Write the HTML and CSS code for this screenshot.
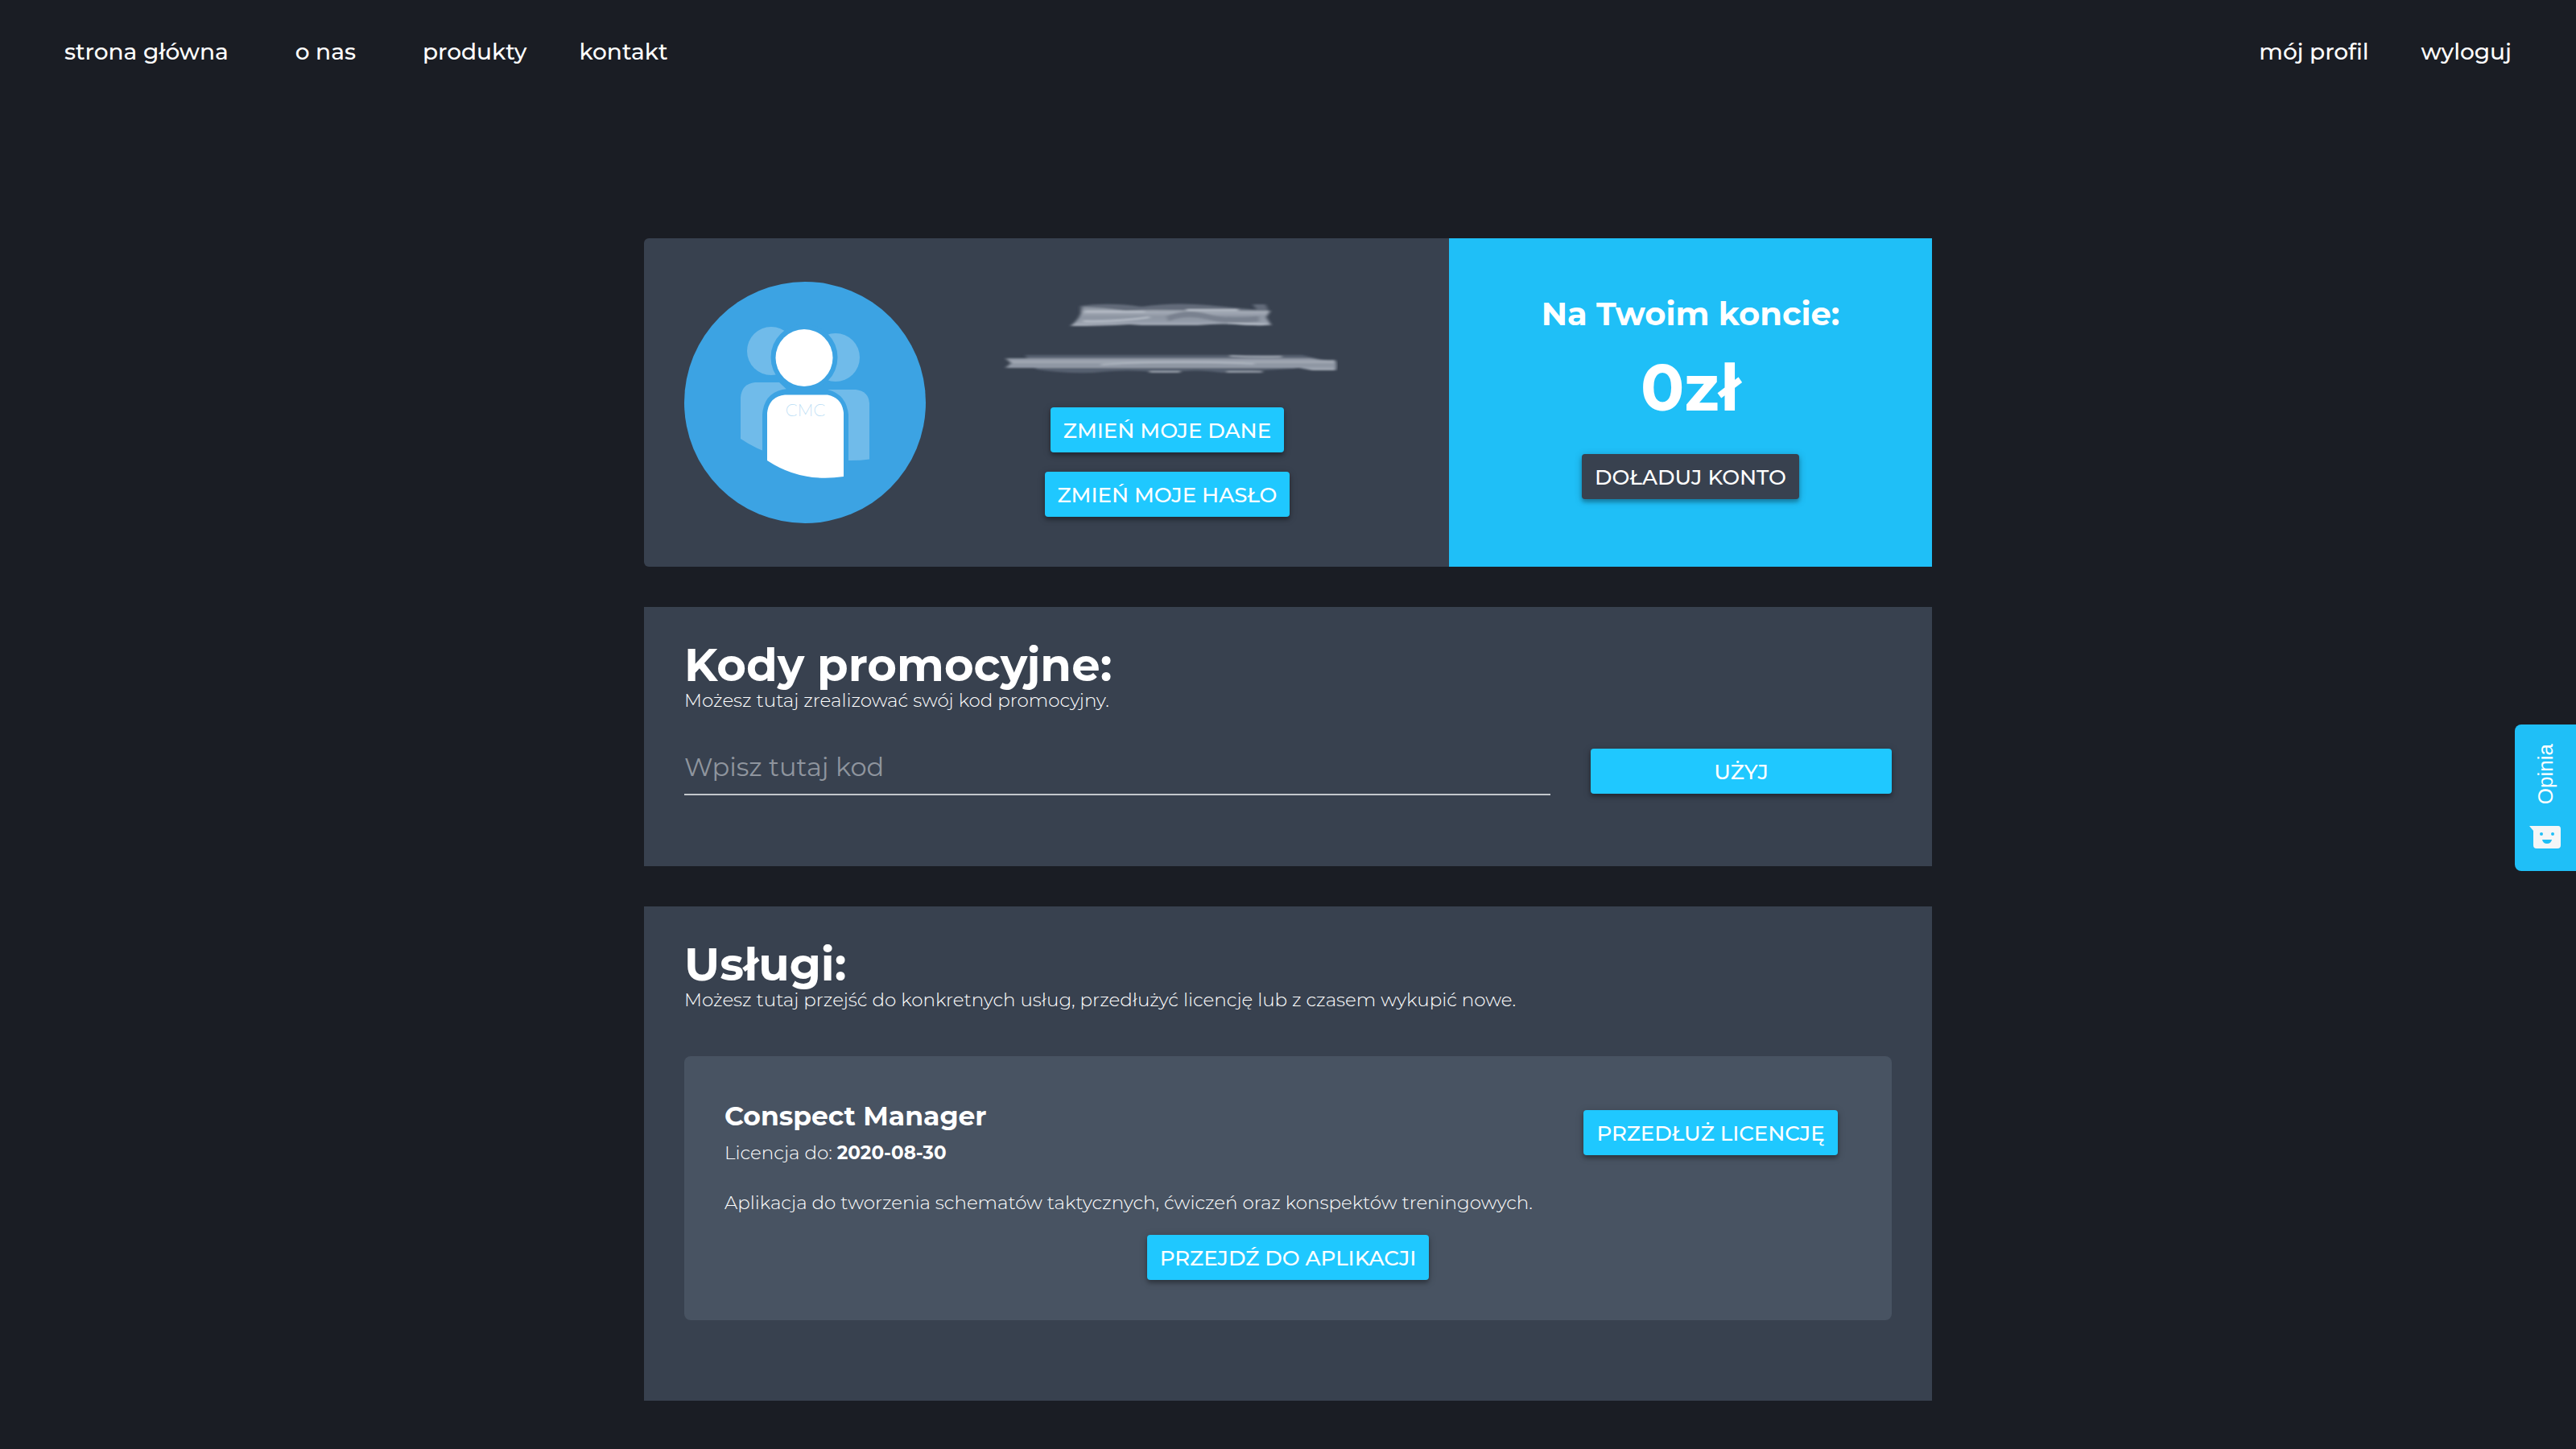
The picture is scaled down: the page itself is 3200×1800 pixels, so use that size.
FILE: index.html
```html
<!DOCTYPE html>
<html lang="pl">
<head>
<meta charset="utf-8">
<meta name="viewport" content="width=device-width, initial-scale=1">
<title>mój profil</title>
<link rel="stylesheet" href="styles.css">
</head>
<body>
<header class="topbar">
  <nav class="nav">
    <a class="nav-link nav-link-wide" href="#">strona główna</a>
    <a class="nav-link nav-link-wide" href="#">o nas</a>
    <a class="nav-link" href="#">produkty</a>
    <a class="nav-link" href="#">kontakt</a>
  </nav>
  <nav class="nav">
    <a class="nav-link" href="#">mój profil</a>
    <a class="nav-link" href="#">wyloguj</a>
  </nav>
</header>

<main class="content">
  <section class="profile">
    <div class="profile-user">
      <svg class="avatar" viewBox="0 0 300 300" aria-hidden="true">
        <circle cx="150" cy="150" r="150" fill="#3ca3e3"/>
        <g fill="#70bbea">
          <circle cx="108" cy="86" r="30"/>
          <circle cx="188" cy="94" r="30"/>
          <path d="M70 195V144Q71 127 88 125H118L136 142V215H112Q89 208 70 195Z"/>
          <path d="M165 134H213Q229 136 230 151V220.500Q217 222.500 200 222Z"/>
        </g>
        <g fill="#3ca3e3">
          <circle cx="149" cy="94" r="41.500"/>
          <path d="M97 244V165Q99 136 128 133H173Q201 137 204 165V244Z"/>
        </g>
        <g fill="#fff">
          <circle cx="149" cy="94.500" r="35.500"/>
          <path d="M103 222V163Q105 143 125 140.500H178Q196 144 198 163V242Q145 250 103 222Z"/>
        </g>
        <text class="avatar-text" x="150.500" y="167" text-anchor="middle">CMC</text>
      </svg>
      <div class="profile-info">
        <svg class="smudges" viewBox="0 0 424 96" aria-hidden="true">
          <defs>
            <linearGradient id="grain" x1="0" y1="0" x2="0" y2="1">
              <stop offset="0" stop-color="#868e9b"/>
              <stop offset=".3" stop-color="#a3aab5"/>
              <stop offset=".5" stop-color="#8d95a2"/>
              <stop offset=".75" stop-color="#929aa7"/>
              <stop offset="1" stop-color="#aab1bc"/>
            </linearGradient>
            <filter id="soft" x="-5%" y="-40%" width="110%" height="180%"><feGaussianBlur stdDeviation="2 1"/></filter>
          </defs>
          <g filter="url(#soft)">
            <path d="M104 6Q140 1 180 7Q220 1 262 5L326 11V14H104ZM318 4L334 4L338 12H324Z" fill="#626b79"/>
            <path d="M92 31Q104 22 108 7Q132 8 160 12L192 11L340 12L335 20L341 30H312Q280 27 250 30H180L165 29Q130 31 92 31Z" fill="url(#grain)"/>
            <path d="M110 13H184M236 11H300M108 25Q150 26 190 20M286 26Q310 30 334 29" fill="none" stroke="#b9c0ca" stroke-width="2"/>
            <path d="M212 22Q236 12 264 20Q286 26 326 22" fill="none" stroke="#79818f" stroke-width="7"/>
            <path d="M35 67H380L408 74L370 84L280 89Q250 84 210 89Q160 84 120 89Q80 90 50 85Z" fill="#576070"/>
            <path d="M11 71H110L390 71Q405 74 420 73Q424 78 421 86H392L376 83H11L18 77Z" fill="url(#grain)"/>
            <path d="M130 79Q220 73 320 78M290 68Q320 70 354 69M190 88H228M286 88H330" fill="none" stroke="#b4bbc5" stroke-width="1.500"/>
          </g>
        </svg>
        <button class="btn" type="button">ZMIEŃ MOJE DANE</button>
        <button class="btn" type="button">ZMIEŃ MOJE HASŁO</button>
      </div>
    </div>
    <div class="balance">
      <h2 class="balance-title">Na Twoim koncie:</h2>
      <p class="balance-amount">0zł</p>
      <button class="btn btn-dark" type="button">DOŁADUJ KONTO</button>
    </div>
  </section>

  <section class="panel panel-codes">
    <h1 class="panel-title">Kody promocyjne:</h1>
    <p class="panel-lead" id="code-help">Możesz tutaj zrealizować swój kod promocyjny.</p>
    <form class="code-form">
      <input class="code-input" type="text" placeholder="Wpisz tutaj kod" aria-labelledby="code-help">
      <button class="btn" type="button">UŻYJ</button>
    </form>
  </section>

  <section class="panel panel-services">
    <h1 class="panel-title">Usługi:</h1>
    <p class="panel-lead">Możesz tutaj przejść do konkretnych usług, przedłużyć licencję lub z czasem wykupić nowe.</p>
    <article class="service">
      <div class="service-head">
        <div>
          <h2 class="service-title">Conspect Manager</h2>
          <p class="service-text">Licencja do: <strong>2020-08-30</strong></p>
        </div>
        <button class="btn" type="button">PRZEDŁUŻ LICENCJĘ</button>
      </div>
      <p class="service-text">Aplikacja do tworzenia schematów taktycznych, ćwiczeń oraz konspektów treningowych.</p>
      <button class="btn service-open" type="button">PRZEJDŹ DO APLIKACJI</button>
    </article>
  </section>
</main>

<button class="feedback" type="button">
  <span class="feedback-label">Opinia</span>
  <svg class="feedback-icon" viewBox="0 0 40 28" aria-hidden="true">
    <path d="M0 0H36Q39 0 39 4V24Q39 28 35 28H9Q5 28 5 24V6Z" fill="#f5f6f7"/>
    <circle cx="15" cy="10" r="2" fill="#1fbff7"/>
    <circle cx="29" cy="10" r="2" fill="#1fbff7"/>
    <path d="M16 17H28Q27 22 22 22T16 17Z" fill="#1fbff7"/>
  </svg>
</button>
</body>
</html>
```
FILE: styles.css
```css
* {
  box-sizing: border-box;
}

body {
  margin: 0;
  background: #1a1d24;
  color: #fff;
  font-family: Montserrat, Inter, sans-serif;
  font-variant-ligatures: none;
}

h1, h2, p {
  margin: 0;
}

.topbar {
  display: flex;
  justify-content: space-between;
  padding: 46px 80px;
}

.nav {
  display: flex;
  gap: 65px;
}

.nav-link {
  color: #fff;
  font-size: 28px;
  font-weight: 500;
  line-height: 36px;
  text-decoration: none;
}

.nav-link-wide {
  margin-right: 18px;
}

.content {
  display: flex;
  flex-direction: column;
  gap: 50px;
  width: 50%;
  margin: 168px auto 60px;
}

.btn {
  height: 56px;
  padding: 2px 16px 0;
  border: 0;
  border-radius: 4px;
  background: #1fc8ff;
  box-shadow: 0 4px 4px rgba(0, 0, 0, .2), 0 2px 10px rgba(0, 0, 0, .25);
  color: #fff;
  font-family: inherit;
  font-size: 26px;
  font-weight: 500;
  line-height: 32px;
}

.btn-dark {
  background: #38414f;
}

.profile {
  display: grid;
  grid-template-columns: 5fr 3fr;
}

.profile-user {
  display: flex;
  padding: 54px 50px;
  border-radius: 6px 0 0 6px;
  background: #38414f;
}

.avatar {
  flex: none;
  width: 300px;
  height: 300px;
}

.avatar-text {
  fill: #b5dbf4;
  font-size: 21px;
  font-weight: 200;
}

.profile-info {
  display: flex;
  flex: 1;
  flex-direction: column;
  align-items: center;
  gap: 24px;
  padding-top: 24px;
}

.smudges {
  width: 424px;
  height: 96px;
  margin-bottom: 12px;
}

.balance {
  display: flex;
  flex-direction: column;
  align-items: center;
  padding-top: 70px;
  background: #1fbff7;
}

.balance-title {
  font-size: 40px;
  font-weight: 700;
  line-height: 48px;
}

.balance-amount {
  margin: 18px 0 32px;
  font-size: 80px;
  font-weight: 700;
  line-height: 100px;
}

.panel {
  padding: 40px 50px 0;
  background: #38414f;
}

.panel-codes {
  padding-bottom: 88px;
}

.panel-services {
  padding-bottom: 100px;
}

.panel-title {
  font-size: 56px;
  font-weight: 700;
  line-height: 64px;
}

.panel-lead {
  font-size: 23px;
  font-weight: 300;
  line-height: 24px;
}

.code-form {
  display: grid;
  grid-template-columns: 1fr 374px;
  align-items: start;
  gap: 50px;
  margin-top: 48px;
}

.code-input {
  width: 100%;
  height: 58px;
  padding: 0 0 12px;
  border: 0;
  border-bottom: 2px solid #c3c7cc;
  background: none;
  color: #fff;
  font-family: inherit;
  font-size: 32px;
}

.code-input::placeholder {
  color: #8f959e;
  opacity: 1;
}

.service {
  display: flex;
  flex-direction: column;
  margin-top: 58px;
  padding: 54px 50px 50px;
  border-radius: 8px;
  background: #485362;
}

.service-head {
  display: grid;
  grid-template-columns: 3fr 1fr;
  align-items: center;
  justify-items: start;
  margin-bottom: 30px;
}

.service-head .btn {
  justify-self: center;
}

.service-title {
  margin-bottom: 10px;
  font-size: 33px;
  font-weight: 700;
  line-height: 40px;
}

.service-text {
  font-size: 23px;
  font-weight: 300;
  line-height: 32px;
}

.service-text strong {
  font-weight: 700;
}

.service-open {
  align-self: center;
  margin-top: 24px;
}

.feedback {
  position: fixed;
  top: 50%;
  right: 0;
  display: flex;
  flex-direction: column;
  align-items: center;
  justify-content: space-between;
  width: 76px;
  height: 182px;
  padding: 24px 0 28px;
  border: 0;
  border-radius: 8px 0 0 8px;
  background: #1fbff7;
  color: #fff;
  font-family: "Liberation Sans", Arial, sans-serif;
  font-size: 26px;
}

.feedback-label {
  line-height: 30px;
  transform: rotate(180deg);
  writing-mode: vertical-rl;
}

.feedback-icon {
  width: 40px;
  height: 28px;
}
```
